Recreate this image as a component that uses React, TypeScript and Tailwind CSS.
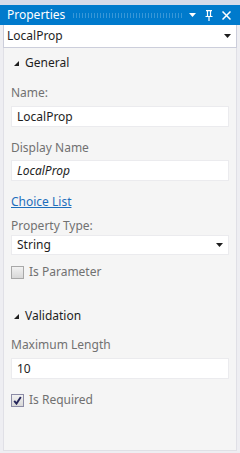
function Caret({ className = "" }: { className?: string }) {
  return (
    <svg width="7" height="4" viewBox="0 0 7 4" className={className}>
      <path d="M0 0h7L3.5 4z" fill="currentColor" />
    </svg>
  );
}

function Section({ title }: { title: string }) {
  return (
    <div className="flex h-[16px] items-center gap-[6px] pl-[10px] text-[12px] leading-[16px] text-[#1e1e1e]">
      <svg width="5" height="5" viewBox="0 0 5 5">
        <path d="M5 0v5H0z" fill="#1e1e1e" />
      </svg>
      <span>{title}</span>
    </div>
  );
}

function Label({ children }: { children: string }) {
  return <div className="h-[16px] text-[12px] leading-[16px] text-[#717171]">{children}</div>;
}

function Field({ value, italic = false }: { value: string; italic?: boolean }) {
  return (
    <div className="h-[21px] border border-[#ebebee] bg-white px-[5px] text-[12px] leading-[19px] text-[#1e1e1e]">
      <span className={italic ? "italic" : ""}>{value}</span>
    </div>
  );
}

function Check({ checked, label }: { checked: boolean; label: string }) {
  return (
    <div className="flex h-[16px] items-center gap-[5px] text-[12px] leading-[16px] text-[#717171]">
      <div
        className={
          "flex h-[13px] w-[13px] items-center justify-center border bg-gradient-to-b from-[#f2f2f2] to-[#d8d8d8] " +
          (checked ? "border-[#8c8ca6]" : "border-[#a8a8a8]")
        }
      >
        {checked && (
          <svg width="9" height="9" viewBox="0 0 9 9">
            <path d="M1.2 4.8l2.3 2.8L7.8 1" stroke="#25255a" strokeWidth="1.9" fill="none" />
          </svg>
        )}
      </div>
      <span>{label}</span>
    </div>
  );
}

export default function App() {
  return (
    <div className="h-[453px] w-[240px] bg-[#d6dbe9] pt-[5px] font-['Noto_Sans',sans-serif]">
      <div className="flex h-[20px] items-center bg-[#007acc] pl-[7px] pr-[9px] text-white">
        <span className="text-[12px] leading-none">Properties</span>
        <div
          className="mx-[7px] h-[5px] flex-1"
          style={{
            backgroundImage: "radial-gradient(circle, rgba(255,255,255,0.22) 0.6px, transparent 0.9px)",
            backgroundSize: "3px 2px",
          }}
        />
        <div className="flex items-center gap-[9px]">
          <Caret className="text-white" />
          <svg width="8" height="11" viewBox="0 0 8 11">
            <path d="M1 0.6h6M2.5 0.6v5.5M5.5 0.6v5.5M0.5 6.5h7M4 6.5v4.5" stroke="white" strokeWidth="1.2" fill="none" />
          </svg>
          <svg width="9" height="9" viewBox="0 0 9 9">
            <path d="M0.5 0.5l8 8M8.5 0.5l-8 8" stroke="white" strokeWidth="1.5" />
          </svg>
        </div>
      </div>
      <div className="h-[428px] bg-[#eeeef2] px-[3px]">
        <div className="flex h-[23px] items-center justify-between border-x border-b border-[#cccedb] bg-white pl-[3px] pr-[5px] text-[12px] text-[#1e1e1e]">
          <span>LocalProp</span>
          <Caret className="text-[#1e1e1e]" />
        </div>
        <div className="h-[403px] border-x border-b border-[#e0e0e6] bg-[#f5f5f5] pt-[7px]">
          <Section title="General" />
          <div className="px-[7px] pt-[14px]">
            <Label>Name:</Label>
            <div className="mt-[5px]">
              <Field value="LocalProp" />
            </div>
            <div className="mt-[13px]">
              <Label>Display Name</Label>
            </div>
            <div className="mt-[4px]">
              <Field value="LocalProp" italic />
            </div>
            <div className="mt-[13px] h-[16px] text-[12px] leading-[16px] text-[#1e6ebc] underline">Choice List</div>
            <div className="mt-[8px]">
              <Label>Property Type:</Label>
            </div>
            <div className="mt-[1px] flex h-[20px] items-center justify-between border border-[#ebebee] bg-white pl-[5px] pr-[5px] text-[12px] text-[#1e1e1e]">
              <span>String</span>
              <Caret className="text-[#1e1e1e]" />
            </div>
            <div className="mt-[9px]">
              <Check checked={false} label="Is Parameter" />
            </div>
          </div>
          <div className="pt-[28px]">
            <Section title="Validation" />
          </div>
          <div className="px-[7px] pt-[13px]">
            <Label>Maximum Length</Label>
            <div className="mt-[5px]">
              <Field value="10" />
            </div>
            <div className="mt-[13px]">
              <Check checked label="Is Required" />
            </div>
          </div>
        </div>
      </div>
    </div>
  );
}
